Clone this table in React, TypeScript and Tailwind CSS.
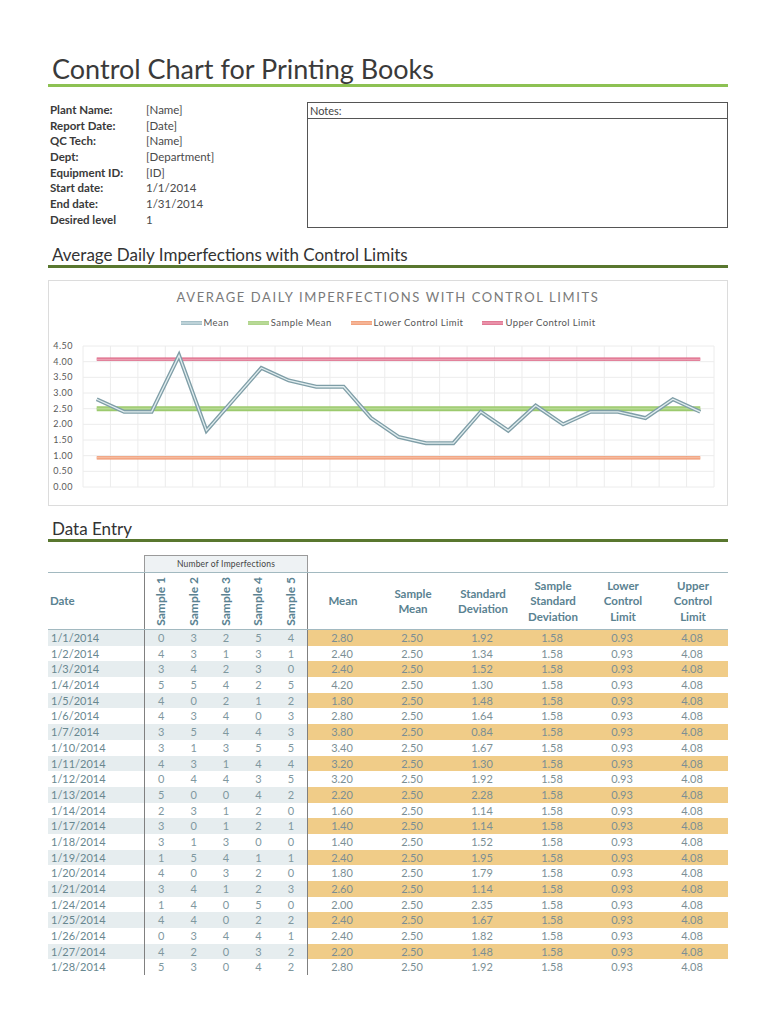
import React from "react";

type Row = { d: string; s: number[]; mean: string; sd: string };

const rows: Row[] = [
  { d: "1/1/2014", s: [0, 3, 2, 5, 4], mean: "2.80", sd: "1.92" },
  { d: "1/2/2014", s: [4, 3, 1, 3, 1], mean: "2.40", sd: "1.34" },
  { d: "1/3/2014", s: [3, 4, 2, 3, 0], mean: "2.40", sd: "1.52" },
  { d: "1/4/2014", s: [5, 5, 4, 2, 5], mean: "4.20", sd: "1.30" },
  { d: "1/5/2014", s: [4, 0, 2, 1, 2], mean: "1.80", sd: "1.48" },
  { d: "1/6/2014", s: [4, 3, 4, 0, 3], mean: "2.80", sd: "1.64" },
  { d: "1/7/2014", s: [3, 5, 4, 4, 3], mean: "3.80", sd: "0.84" },
  { d: "1/10/2014", s: [3, 1, 3, 5, 5], mean: "3.40", sd: "1.67" },
  { d: "1/11/2014", s: [4, 3, 1, 4, 4], mean: "3.20", sd: "1.30" },
  { d: "1/12/2014", s: [0, 4, 4, 3, 5], mean: "3.20", sd: "1.92" },
  { d: "1/13/2014", s: [5, 0, 0, 4, 2], mean: "2.20", sd: "2.28" },
  { d: "1/14/2014", s: [2, 3, 1, 2, 0], mean: "1.60", sd: "1.14" },
  { d: "1/17/2014", s: [3, 0, 1, 2, 1], mean: "1.40", sd: "1.14" },
  { d: "1/18/2014", s: [3, 1, 3, 0, 0], mean: "1.40", sd: "1.52" },
  { d: "1/19/2014", s: [1, 5, 4, 1, 1], mean: "2.40", sd: "1.95" },
  { d: "1/20/2014", s: [4, 0, 3, 2, 0], mean: "1.80", sd: "1.79" },
  { d: "1/21/2014", s: [3, 4, 1, 2, 3], mean: "2.60", sd: "1.14" },
  { d: "1/24/2014", s: [1, 4, 0, 5, 0], mean: "2.00", sd: "2.35" },
  { d: "1/25/2014", s: [4, 4, 0, 2, 2], mean: "2.40", sd: "1.67" },
  { d: "1/26/2014", s: [0, 3, 4, 4, 1], mean: "2.40", sd: "1.82" },
  { d: "1/27/2014", s: [4, 2, 0, 3, 2], mean: "2.20", sd: "1.48" },
  { d: "1/28/2014", s: [5, 3, 0, 4, 2], mean: "2.80", sd: "1.92" },
];

const info: [string, string][] = [
  ["Plant Name:", "[Name]"],
  ["Report Date:", "[Date]"],
  ["QC Tech:", "[Name]"],
  ["Dept:", "[Department]"],
  ["Equipment ID:", "[ID]"],
  ["Start date:", "1/1/2014"],
  ["End date:", "1/31/2014"],
  ["Desired level", "1"],
];

const chartMeans = [...rows.map((r) => parseFloat(r.mean)), 2.4];

const PL = 10; // plot left in svg
const CW = 27.435; // category width
const PT = 6; // plot top
const PB = 147; // plot bottom
const UNIT = (PB - PT) / 4.5;

const px = (i: number) => PL + (i + 0.5) * CW;
const py = (v: number) => PB - v * UNIT;

function LegendIcon({ outer, inner }: { outer: string; inner: string }) {
  return (
    <svg width="21" height="6" viewBox="0 0 21 6">
      <line x1="0" y1="3" x2="21" y2="3" stroke={outer} strokeWidth="3.6" />
      <line x1="0" y1="3" x2="21" y2="3" stroke={inner} strokeWidth="1.1" />
    </svg>
  );
}

function HLine({ v, outer, inner, w, iw }: { v: number; outer: string; inner: string; w: number; iw: number }) {
  const x1 = px(0);
  const x2 = px(chartMeans.length - 1);
  return (
    <g>
      <line x1={x1} y1={py(v)} x2={x2} y2={py(v)} stroke={outer} strokeWidth={w} />
      <line x1={x1} y1={py(v)} x2={x2} y2={py(v)} stroke={inner} strokeWidth={iw} />
    </g>
  );
}

function Chart() {
  const pts = chartMeans.map((v, i) => `${px(i).toFixed(2)},${py(v).toFixed(2)}`).join(" ");
  const vgrid = Array.from({ length: 24 }, (_, k) => PL + k * CW);
  const hgrid = Array.from({ length: 10 }, (_, j) => PT + j * (UNIT / 2));
  return (
    <svg width="646" height="153" viewBox="0 0 646 153">
      {vgrid.map((x, k) => (
        <line key={"v" + k} x1={x} y1={PT} x2={x} y2={PB} stroke="#ececec" strokeWidth="1" />
      ))}
      {hgrid.map((y, j) => (
        <line key={"h" + j} x1={PL} y1={y} x2={PL + 23 * CW} y2={y} stroke="#ececec" strokeWidth="1" />
      ))}
      <HLine v={4.08} outer="#d9587a" inner="#f6c2cf" w={3.4} iw={1} />
      <HLine v={0.93} outer="#ee8c60" inner="#fbd6c4" w={3.4} iw={1} />
      <HLine v={2.5} outer="#9cca6e" inner="#b6da92" w={5} iw={1.8} />
      <polyline points={pts} fill="none" stroke="#7f9ea7" strokeWidth="4" strokeLinejoin="miter" />
      <polyline points={pts} fill="none" stroke="#e2eef0" strokeWidth="1.3" strokeLinejoin="miter" />
    </svg>
  );
}

export default function App() {
  const ylabels = ["4.50", "4.00", "3.50", "3.00", "2.50", "2.00", "1.50", "1.00", "0.50", "0.00"];
  return (
    <div className="w-[768px] h-[1024px] overflow-hidden bg-white pl-[48px] pr-[40px] pt-[53px] [font-family:Lato,'Open_Sans',sans-serif]">
      {/* Title */}
      <div className="h-[34px] border-b-[3px] border-[#8dc153] pl-[4px] text-[27px] leading-[31px] text-[#3a3a3a] whitespace-nowrap">
        Control Chart for Printing Books
      </div>

      {/* Info + notes */}
      <div className="mt-[15px] flex">
        <div className="w-[259px]">
          {info.map(([k, v]) => (
            <div key={k} className="flex h-[15.7px] leading-[15.7px] text-[11.5px]">
              <div className="w-[98px] pl-[2px] font-bold text-[#3a3a3a]">{k}</div>
              <div className="text-[#4a4a4a]">{v}</div>
            </div>
          ))}
        </div>
        <div className="flex h-[126px] w-[421px] flex-col border border-[#555]">
          <div className="h-[16px] border-b border-[#555] pl-[2px] text-[11px] leading-[15px] text-[#444]">Notes:</div>
          <div className="flex-1" />
        </div>
      </div>

      {/* Section heading */}
      <div className="mt-[16px] h-[24px] border-b-[3px] border-[#59772f] pl-[4px] text-[17px] leading-[21px] text-[#333] whitespace-nowrap">
        Average Daily Imperfections with Control Limits
      </div>

      {/* Chart */}
      <div className="mt-[12px] h-[226px] border border-[#dcdcdc] bg-white">
        <div className="pt-[7px] text-center text-[13px] leading-[18px] tracking-[1.6px] text-[#7a7a7a]">
          AVERAGE DAILY IMPERFECTIONS WITH CONTROL LIMITS
        </div>
        <div className="mt-[11px] flex h-[12px] items-center justify-center gap-[19px] text-[9.5px] leading-[12px] tracking-[0.4px] text-[#555]">
          <div className="flex items-center gap-[2px]">
            <LegendIcon outer="#8fb0ba" inner="#e4eef1" />
            <span>Mean</span>
          </div>
          <div className="flex items-center gap-[2px]">
            <LegendIcon outer="#9cca6e" inner="#cfe6b8" />
            <span>Sample Mean</span>
          </div>
          <div className="flex items-center gap-[2px]">
            <LegendIcon outer="#ee8c60" inner="#fbd6c4" />
            <span>Lower Control Limit</span>
          </div>
          <div className="flex items-center gap-[2px]">
            <LegendIcon outer="#d9587a" inner="#f6c2cf" />
            <span>Upper Control Limit</span>
          </div>
        </div>
        <div className="mt-[11px] flex h-[153px]">
          <div className="flex w-[24px] flex-col items-end justify-between text-[9px] leading-[12px] tracking-[0.5px] text-[#595959]">
            {ylabels.map((l) => (
              <div key={l}>{l}</div>
            ))}
          </div>
          <Chart />
        </div>
      </div>

      {/* Data entry heading */}
      <div className="mt-[12px] h-[24px] border-b-[3px] border-[#59772f] pl-[4px] text-[17px] leading-[21px] text-[#333]">
        Data Entry
      </div>

      {/* Table */}
      <div className="mt-[13px]">
        <div className="flex h-[17px]">
          <div className="w-[96px]" />
          <div className="w-[164px] border-x border-t border-[#9a9a9a] bg-[#eef2f4] text-center text-[8.5px] leading-[16px] tracking-[0.2px] text-[#444]">
            Number of Imperfections
          </div>
        </div>
        <div className="flex h-[58px] border-y border-[#a2b9c0] text-[11.5px] font-bold leading-[15.5px] text-[#5a8291]">
          <div className="flex w-[96px] items-center pl-[2px]">Date</div>
          <div className="flex w-[164px] border-x border-[#808080]">
            {[1, 2, 3, 4, 5].map((n) => (
              <div key={n} className="flex flex-1 items-center justify-center">
                <span className="rotate-180 text-[12px] leading-[12px] [writing-mode:vertical-rl]">Sample {n}</span>
              </div>
            ))}
          </div>
          {[["Mean"], ["Sample", "Mean"], ["Standard", "Deviation"], ["Sample", "Standard", "Deviation"], ["Lower", "Control", "Limit"], ["Upper", "Control", "Limit"]].map((lines, i) => (
            <div key={i} className="flex w-[70px] flex-col items-center justify-center text-center">
              {lines.map((l) => (
                <div key={l}>{l}</div>
              ))}
            </div>
          ))}
        </div>
        {rows.map((r, i) => {
          const odd = i % 2 === 0;
          return (
            <div key={r.d} className="flex h-[15.7px] text-[11px] leading-[15.7px]">
              <div className={`w-[96px] pl-[3px] text-[#68878f] ${odd ? "bg-[#e6edef]" : "bg-white"}`}>{r.d}</div>
              <div className={`flex w-[164px] border-x border-[#808080] text-[#7f989f] ${odd ? "bg-[#e6edef]" : "bg-white"}`}>
                {r.s.map((v, j) => (
                  <div key={j} className="flex-1 text-center">
                    {v}
                  </div>
                ))}
              </div>
              <div className={`flex w-[420px] text-[#7b8f95] ${odd ? "bg-[#f0cc88]" : "bg-white"}`}>
                {[r.mean, "2.50", r.sd, "1.58", "0.93", "4.08"].map((v, j) => (
                  <div key={j} className="w-[70px] pr-[2px] text-center">
                    {v}
                  </div>
                ))}
              </div>
            </div>
          );
        })}
      </div>
    </div>
  );
}
